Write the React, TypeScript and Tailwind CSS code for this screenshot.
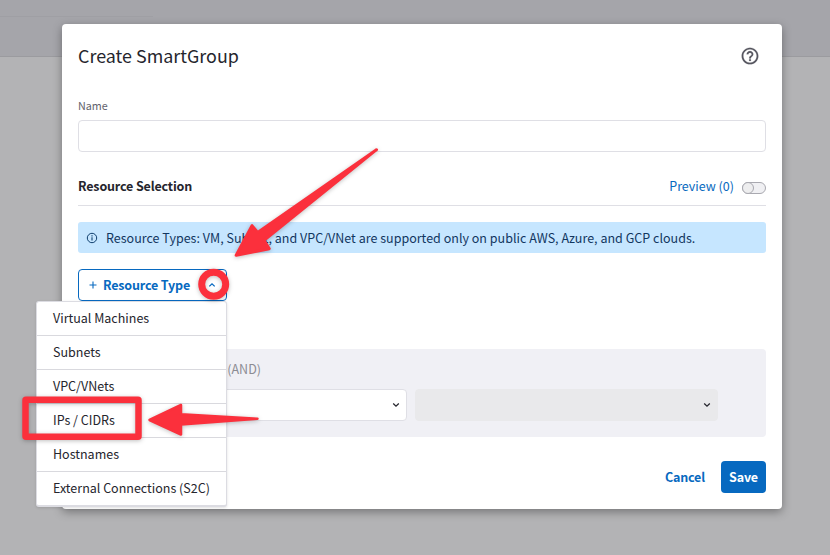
const resourceTypes = [
  "Virtual Machines",
  "Subnets",
  "VPC/VNets",
  "IPs / CIDRs",
  "Hostnames",
  "External Connections (S2C)",
];

function HelpIcon() {
  return (
    <svg width="20" height="20" viewBox="0 0 24 24" fill="#55555f" stroke="#55555f" strokeWidth="0.2">
      <path d="M11 18h2v-2h-2v2zm1-16C6.480 2 2 6.480 2 12s4.480 10 10 10 10-4.480 10-10S17.520 2 12 2zm0 18c-4.410 0-8-3.590-8-8s3.590-8 8-8 8 3.590 8 8-3.590 8-8 8zm0-14c-2.210 0-4 1.790-4 4h2c0-1.100.9-2 2-2s2 .9 2 2c0 2-3 1.750-3 5h2c0-2.250 3-2.500 3-5 0-2.210-1.790-4-4-4z" />
    </svg>
  );
}

function InfoIcon() {
  return (
    <svg width="12" height="12" viewBox="0 0 12 12" fill="none" stroke="#10406f">
      <circle cx="6" cy="6" r="4.700" strokeWidth="1" />
      <path d="M6 5.300v3.200M6 3.300v1.100" strokeWidth="1.100" />
    </svg>
  );
}

function Chevron({ up = false, color = "#25252d" }: { up?: boolean; color?: string }) {
  return (
    <svg width="8" height="6" viewBox="0 0 8 6" fill="none" stroke={color} strokeWidth="1.300">
      <path d={up ? "M1.300 4.400 4 1.800l2.700 2.600" : "M1.200 1.600 4 4.200l2.800-2.600"} />
    </svg>
  );
}

function SelectBox({ className }: { className: string }) {
  return (
    <div className={`flex h-8 items-center justify-end rounded border pr-[6px] ${className}`}>
      <Chevron />
    </div>
  );
}

function Annotations() {
  return (
    <svg
      className="pointer-events-none absolute inset-0 z-20 drop-shadow-[0_1px_2px_rgba(0,0,0,0.25)]"
      width="830"
      height="555"
      viewBox="0 0 830 555"
      fill="#fb303c"
      stroke="#fb303c"
      strokeLinejoin="round"
    >
      <path d="M376.500 149.700 257.700 232.500 252 225.700 236.200 255.300 269.300 248.700 264 240.300Z" strokeWidth="3" />
      <path d="M257.500 418.800 181 414.300V405L149.500 420 181 434.500V424.500Z" strokeWidth="2.500" />
      <circle cx="213.700" cy="284.300" r="12" fill="none" strokeWidth="7" />
      <rect x="25.500" y="399.700" width="113" height="37" rx="0.500" fill="none" strokeWidth="6.500" />
    </svg>
  );
}

export default function App() {
  return (
    <div className="relative h-[555px] w-[830px] overflow-hidden bg-[#b3b3b5] font-['Noto_Sans_CJK_SC',sans-serif] text-[12.5px] text-[#25252d]">
      <div className="h-[57px] border-b border-[#9b9b9f] bg-[#a5a5aa]">
        <div className="h-[17px] w-[153px] border-b border-[#9f9fa4]" />
      </div>

      <div className="absolute inset-0 flex items-start justify-center pt-6 pl-[14px]">
        <section className="flex h-[485px] w-[720px] flex-col rounded bg-white px-4 shadow-[0_3px_10px_rgba(0,0,0,0.35)]">
          <header className="flex h-16 items-center justify-between pr-[6px]">
            <h1 className="-mt-[3px] text-[17.9px] leading-6">Create SmartGroup</h1>
            <HelpIcon />
          </header>

          <label className="mt-[10px] block h-[22px] text-[10.75px] leading-4 text-[#62626c]">Name</label>
          <div className="h-8 shrink-0 rounded border border-[#dfdfe5]" />

          <div className="flex h-[54px] shrink-0 items-center justify-between border-b border-[#dfdfe5] pt-4">
            <h2 className="-mt-[2px] leading-5 font-bold tracking-[-0.15px]">Resource Selection</h2>
            <div className="flex items-center gap-2">
              <span className="-mt-[2px] leading-5 text-[#0769c0]">Preview (0)</span>
              <span className="mt-[2px] flex h-3 w-6 rounded-full border border-[#a9a9b0] bg-[#f0f0f3]">
                <span className="-mt-px -ml-px h-3 w-3 rounded-full border border-[#a9a9b0] bg-[#eeeeef]" />
              </span>
            </div>
          </div>

          <div className="mt-4 flex h-[31px] shrink-0 items-center gap-2 rounded-[3px] bg-[#c6e6ff] px-2 text-[#12365f]">
            <InfoIcon />
            <span className="pt-[2px] tracking-[0.012px]">
              Resource Types: VM, Subnet, and VPC/VNet are supported only on public AWS, Azure, and GCP clouds.
            </span>
          </div>

          <div className="relative mt-4 w-[149px]">
            <button className="flex h-8 w-[149px] items-center rounded border border-[#0769c0] pl-[10px] text-[#0769c0]">
              <svg width="8" height="8" viewBox="0 0 8 8" stroke="currentColor" strokeWidth="1.100">
                <path d="M4 .5v7M.5 4h7" />
              </svg>
              <span className="ml-[6px] grow text-left font-bold tracking-[-0.16px]">Resource Type</span>
              <span className="mr-[10px]"><Chevron up color="#0769c0" /></span>
            </button>
            <ul className="absolute top-8 right-0 z-10 w-[191px] rounded-[3px] border border-b-2 border-[#dcdce2] bg-white shadow-[0_1px_3px_rgba(0,0,0,0.12)]">
              {resourceTypes.map((type) => (
                <li key={type} className="h-[34px] border-b border-[#d9d9de] pl-4 leading-[32px] last:h-[33px] last:border-0">
                  {type}
                </li>
              ))}
            </ul>
          </div>

          <div className="mt-12 h-[88px] shrink-0 rounded bg-[#f0f0f5] px-4">
            <p className="h-10 w-[167px] text-right leading-10 text-[#8c8c93]">(AND)</p>
            <div className="flex gap-2">
              <SelectBox className="w-[313px] border-[#dfdfe5] bg-white" />
              <SelectBox className="w-[303px] border-[#e9e9eb] bg-[#e9e9eb]" />
            </div>
          </div>

          <footer className="mt-6 flex items-center justify-end gap-4 font-bold tracking-[-0.15px]">
            <button className="text-[#0769c0]">Cancel</button>
            <button className="h-8 w-[45px] rounded bg-[#0769c0] text-white">Save</button>
          </footer>
        </section>
      </div>
      <Annotations />
    </div>
  );
}
